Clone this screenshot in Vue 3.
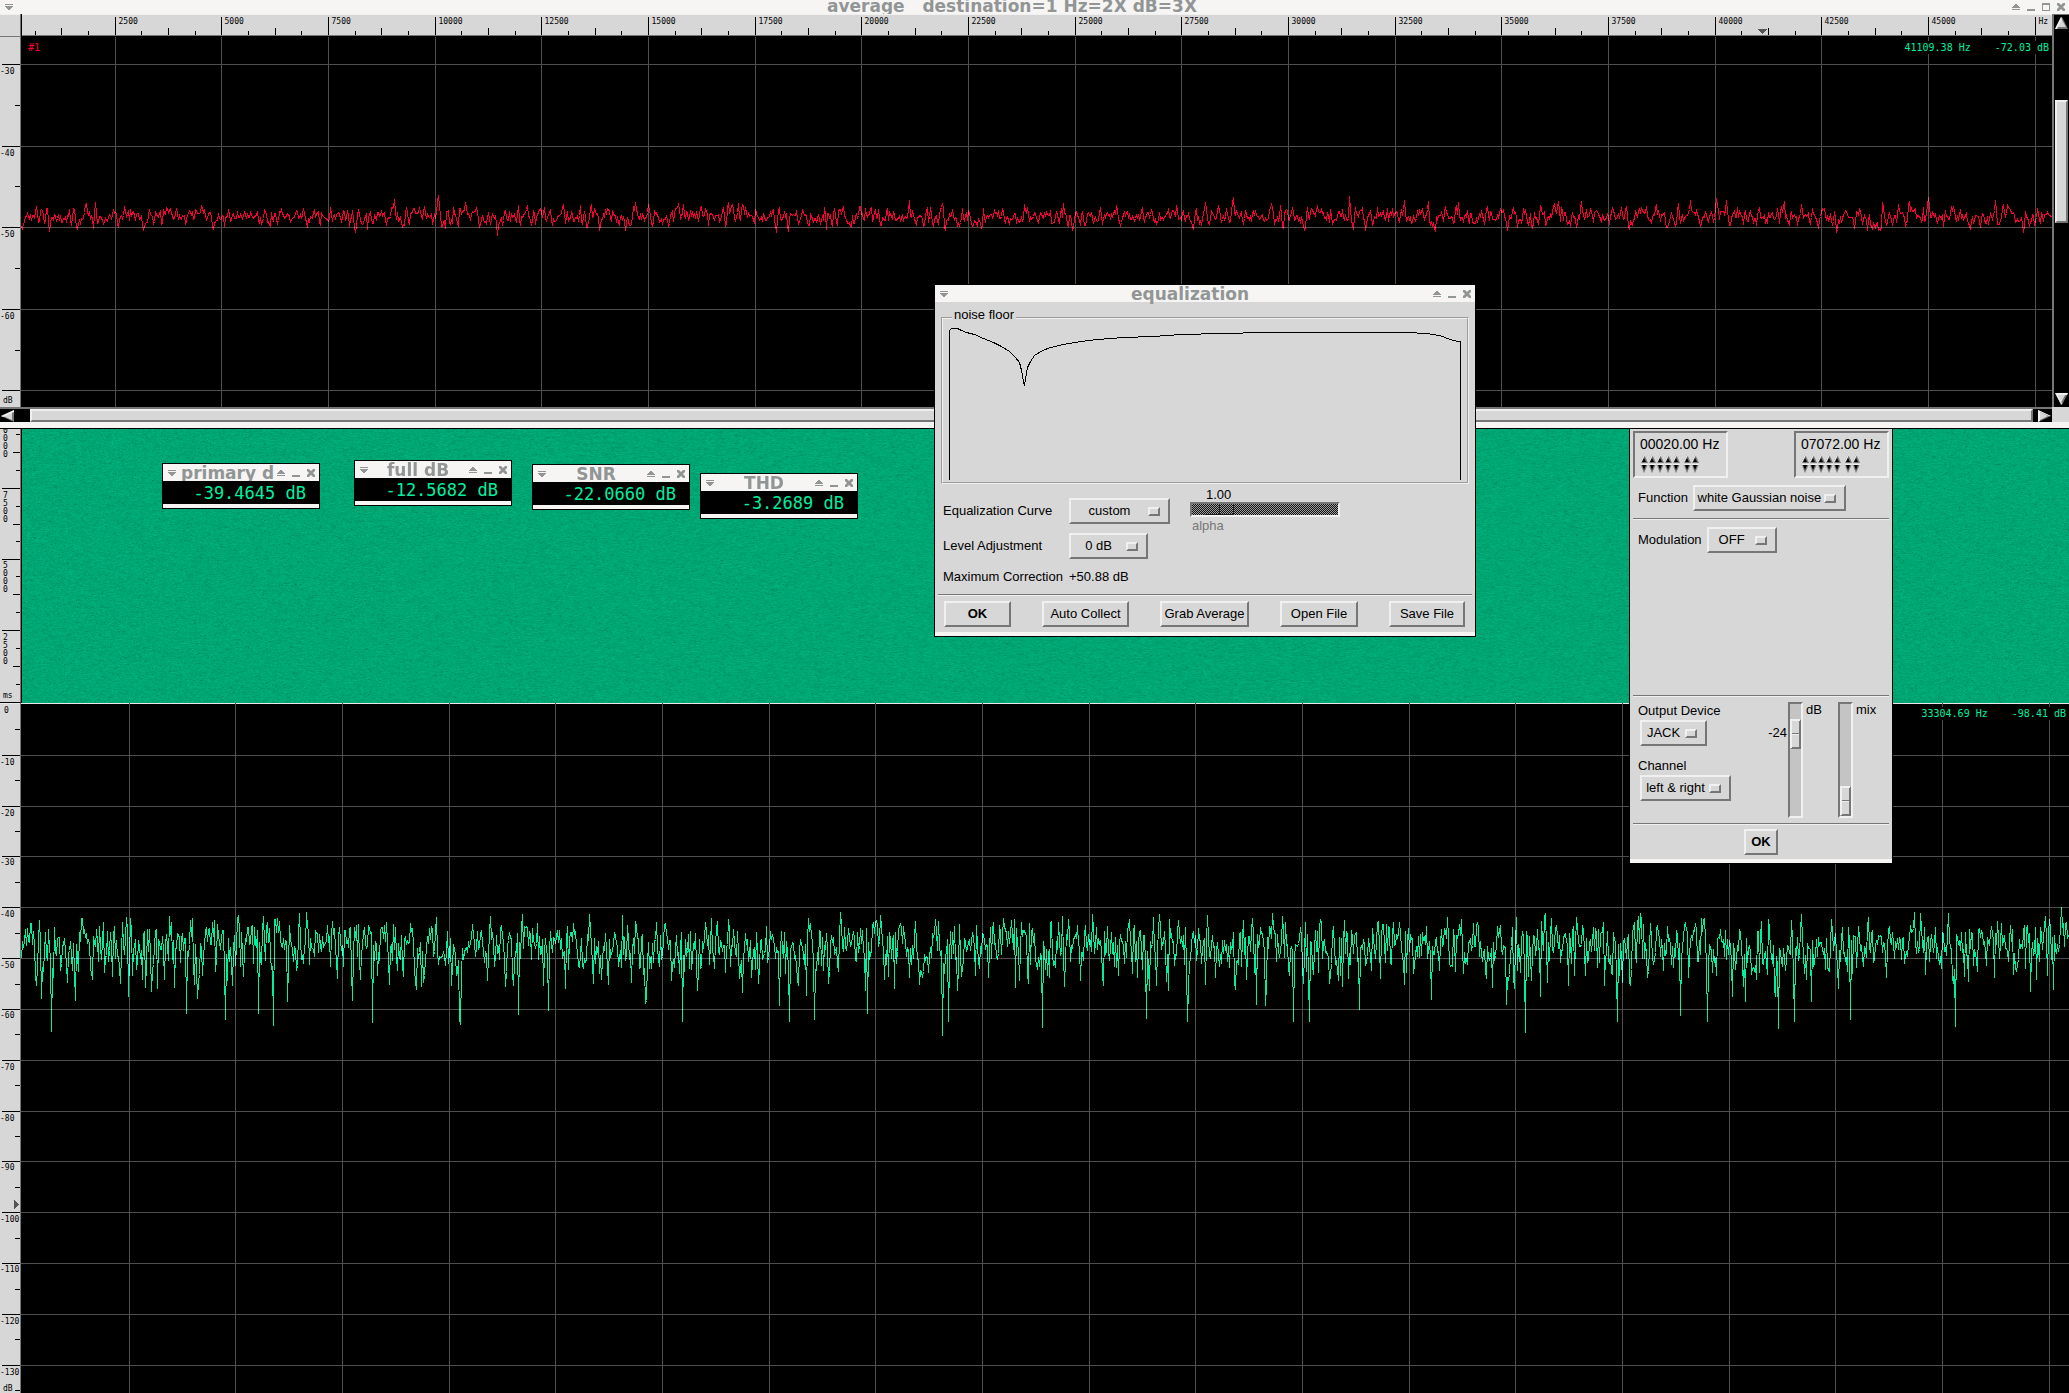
<script setup>
import { onMounted, ref } from 'vue'

const pct = (value, total) => `${(value / total) * 100}%`

const mainTitle = 'average   destination=1 Hz=2X dB=3X'
const averageReadout = '41109.38 Hz    -72.03 dB'
const liveReadout = '33304.69 Hz    -98.41 dB'

function randomSource(seed) {
  let state = seed
  return () => {
    state = (state + 0x6d2b79f5) | 0
    let t = Math.imul(state ^ (state >>> 15), 1 | state)
    t = (t + Math.imul(t ^ (t >>> 7), 61 | t)) ^ t
    return ((t ^ (t >>> 14)) >>> 0) / 4294967296
  }
}

function gaussian(random) {
  return Math.sqrt(-2 * Math.log(1 - random())) * Math.cos(2 * Math.PI * random())
}

/* Frequency axis: one tick per 625 Hz, a labelled one per 2500 Hz */
function frequencyTicks(origin, width) {
  const ticks = []
  for (let i = 1; i < 80; i++) {
    const x = Math.round(origin + i * 26.6667) + 0.5
    if (x < 2 || x > width) continue
    const level = i % 4 === 0 ? 'major' : i % 2 === 0 ? 'mid' : 'minor'
    const hz = i * 625
    ticks.push({ x: pct(x, width), level, label: level === 'major' ? (hz > 45000 ? 'Hz' : String(hz)) : '' })
  }
  return ticks
}
const topX = frequencyTicks(-13, 2031)
const bottomX = frequencyTicks(1, 2048).filter((t) => t.level === 'major')
const tickTop = { major: 3, mid: 14, minor: 17 }

function levelTicks(start, step, from, count, height) {
  const ticks = []
  for (let i = 0; i < count; i++) {
    const y = Math.round(start + (i * step) / 2) + 0.5
    ticks.push({ y: pct(y, height), major: i % 2 === 0, label: i % 2 === 0 ? String(from - i * 5) : '' })
  }
  return ticks
}
const topY = levelTicks(27, 81.6, -30, 9, 370).map((t, i) => (i === 8 ? { ...t, label: '' } : t))
const bottomY = levelTicks(1, 50.83, 0, 28, 690).slice(1)

const timeTicks = []
for (let k = 0; k < 15; k++) {
  const y = 5 + k * 17.9
  const phase = (k + 1) % 4
  timeTicks.push({ y: pct(Math.round(y) + 0.5, 274), x: phase === 0 ? 2 : phase === 2 ? 13 : 16 })
}
const timeLabels = [
  { at: -5, digits: '0000' },
  { at: 60, digits: '7500' },
  { at: 131, digits: '5000' },
  { at: 203, digits: '2500' },
]
const timeDigits = timeLabels.flatMap((l) =>
  [...l.digits].map((digit, i) => ({ digit, y: pct(l.at + 9 + i * 8, 274) })),
)

function averagedTrace() {
  const random = randomSource(11)
  const raw = Array.from({ length: 2034 }, () => gaussian(random))
  return Array.from({ length: 2031 }, (_, x) => {
    const v = raw[x] * 0.3 + raw[x + 1] + raw[x + 2] * 0.3
    return `${x + 0.5},${Math.round(179 - v * 5 - (v > 2 ? (v - 2) * 2 : 0)) + 0.5}`
  }).join(' ')
}

const deepDips = { 30: 328, 237: 310, 252: 322, 351: 319, 439: 321, 846: 310, 921: 332, 1021: 324, 1504: 329, 1757: 325, 1829: 316, 1934: 323 }
function liveTrace() {
  const random = randomSource(42)
  const n = 2048
  const parts = Array.from({ length: 5 }, () => Array.from({ length: n + 2 }, () => gaussian(random)))
  return Array.from({ length: n }, (_, x) => {
    let power = 0
    for (const p of parts) {
      const v = p[x] * 0.3 + p[x + 1] + p[x + 2] * 0.3
      power += v * v
    }
    const db = 10 * Math.log10(power / 5.9)
    const y = deepDips[x] ?? Math.min(318, 240 - db * 6)
    return `${x + 0.5},${Math.round(y) + 0.5}`
  }).join(' ')
}
const redTrace = averagedTrace()
const greenTrace = liveTrace()

const noiseFloor =
  '6,160 6,11 8,9 14,9 18,11 23,13 31,15 40,19 50,23 58,27 66,32 72,38 76,43 78,51 80,62 81,66 82,59 84,48 87,42 91,36 99,31 107,28 120,25 137,22 154,20 180,18 209,17 238,15 278,14 322,13 358,13 464,13 483,14 496,16 507,20 514,22 517,22 517,160'

const meters = [
  { id: 'primary', title: 'primary d', value: '-39.4645 dB' },
  { id: 'full', title: 'full dB', value: '-12.5682 dB' },
  { id: 'snr', title: 'SNR', value: '-22.0660 dB' },
  { id: 'thd', title: 'THD', value: '-3.2689 dB' },
]

const curve = ref('custom')
const level = ref('0 dB')
const alpha = ref(1)
const waveform = ref('white Gaussian noise')
const modulation = ref('OFF')
const device = ref('JACK')
const channel = ref('left & right')
const gain = ref(-24)
const mix = ref(0)
const frequencies = ['00020.00 Hz', '07072.00 Hz']

const waterfall = ref(null)
onMounted(() => {
  const canvas = waterfall.value
  const ctx = canvas.getContext('2d')
  const { width, height } = canvas
  const image = ctx.createImageData(width, height)
  const random = randomSource(7)
  let previous = 0
  for (let i = 0; i < width * height; i++) {
    const g = gaussian(random)
    previous = previous * 0.35 + g
    const n = Math.max(-30, Math.min(14, previous * 6 - (g < -2.3 ? 12 : 0)))
    image.data[i * 4] = 0
    image.data[i * 4 + 1] = 166 + n
    image.data[i * 4 + 2] = 115 + n * 0.7
    image.data[i * 4 + 3] = 255
  }
  ctx.putImageData(image, 0, 0)
})
</script>

<template>
  <main class="desktop">
    <section class="average">
      <header class="titlebar main-title">
        <button class="tb" aria-label="Window menu"><svg viewBox="0 0 8 6"><path d="M0 0h8v1H0zM0 2h8v1H7v1H6v1H5v1H3V5H2V4H1V3H0z" /></svg></button>
        <h1>{{ mainTitle }}</h1>
        <button class="tb" aria-label="Shade"><svg viewBox="0 0 8 6"><path d="M0 5h8v1H0zM3 0h2v1h1v1h1v1h1v1H0V3h1V2h1V1h1z" /></svg></button>
        <button class="tb" aria-label="Minimize"><svg viewBox="0 0 8 8"><path d="M0 6h8v2H0z" /></svg></button>
        <button class="tb" aria-label="Maximize"><svg viewBox="0 0 8 8"><path d="M0 0h8v8H0zM1 2v5h6V2z" fill-rule="evenodd" /></svg></button>
        <button class="tb" aria-label="Close"><svg viewBox="0 0 8 8"><path d="M0 0h2l2 2 2-2h2v2L6 4l2 2v2H6L4 6 2 8H0V6l2-2-2-2z" /></svg></button>
      </header>

      <div class="average-body">
        <div class="corner"></div>
        <svg class="h-ruler crisp">
          <template v-for="t in topX" :key="t.x">
            <line :x1="t.x" :x2="t.x" :y1="tickTop[t.level]" y2="21" class="tick" />
            <text v-if="t.label" :x="t.x" y="10" dx="3" class="scale">{{ t.label }}</text>
          </template>
          <svg :x="pct(1737, 2031)" y="15" width="9" height="5"><path d="M0 0h9L5 5H4z" fill="#555" /></svg>
        </svg>
        <svg class="v-ruler crisp">
          <template v-for="t in topY" :key="t.y">
            <line :x1="t.major ? 2 : 15" x2="20" :y1="t.y" :y2="t.y" class="tick" />
            <text x="0" :y="t.y" dy="9" class="scale">{{ t.label }}</text>
          </template>
          <text x="3" :y="pct(366, 370)" class="scale">dB</text>
        </svg>
        <div class="plot">
          <svg class="fill crisp">
            <line v-for="t in topX.filter((l) => l.label)" :key="t.x" :x1="t.x" :x2="t.x" y1="0" y2="100%" class="grid" />
            <line v-for="t in topY.filter((l) => l.major)" :key="t.y" x1="0" x2="100%" :y1="t.y" :y2="t.y" class="grid" />
            <svg viewBox="0 0 2031 370" preserveAspectRatio="none" width="100%" height="100%">
              <polyline :points="redTrace" class="trace red" />
            </svg>
          </svg>
          <span class="trace-id">#1</span>
          <output class="readout">{{ averageReadout }}</output>
        </div>
        <div class="v-scroll">
          <svg viewBox="0 0 13 12" class="arrow"><path d="M6 0h1l6 12H0z" fill="#767676" /><path d="M6 1l5 9H1z" fill="#d7d7d7" /><path d="M6 0L0 12h2L7 2z" fill="#f0f0f0" /></svg>
          <div class="v-track"><div class="v-thumb"></div></div>
          <svg viewBox="0 0 13 12" class="arrow"><path d="M0 0h13L7 12H6z" fill="#767676" /><path d="M2 2h8l-4 8z" fill="#d7d7d7" /><path d="M0 0h13l-1 2H3l4 9H6z" fill="#f0f0f0" /></svg>
        </div>
      </div>
      <div class="h-scroll">
        <svg viewBox="0 0 13 12" class="arrow"><path d="M0 6l13-6v12z" fill="#767676" /><path d="M2 6l9-4v8z" fill="#d7d7d7" /><path d="M0 6l13-6v2L2 7z" fill="#f0f0f0" /></svg>
        <div class="h-thumb"></div>
        <svg viewBox="0 0 13 12" class="arrow"><path d="M0 0l13 6-13 6z" fill="#767676" /><path d="M2 2l8 4-8 4z" fill="#d7d7d7" /><path d="M0 0l13 6H11L2 2v9l-2 1z" fill="#f0f0f0" /></svg>
        <div class="scroll-corner"></div>
      </div>
      <div class="window-foot"></div>
    </section>

    <section class="spectrogram">
      <svg class="v-ruler crisp">
        <line v-for="t in timeTicks" :key="t.y" :x1="t.x" x2="20" :y1="t.y" :y2="t.y" class="tick" />
        <text v-for="d in timeDigits" :key="d.y" x="3" :y="d.y" class="scale">{{ d.digit }}</text>
        <text x="3" :y="pct(270, 274)" class="scale">ms</text>
      </svg>
      <div class="waterfall"><canvas ref="waterfall" width="2048" height="274"></canvas></div>
    </section>

    <section class="live">
      <svg class="v-ruler crisp">
        <text x="4" y="10" class="scale">0</text>
        <template v-for="t in bottomY" :key="t.y">
          <line :x1="t.major ? 2 : 15" x2="20" :y1="t.y" :y2="t.y" class="tick" />
          <text x="0" :y="t.y" dy="9" class="scale">{{ t.label }}</text>
        </template>
        <svg x="14" :y="pct(497, 690)" width="5" height="9"><path d="M0 0l5 4v1L0 9z" fill="#555" /></svg>
        <text x="3" :y="pct(688, 690)" class="scale">dB</text>
      </svg>
      <div class="plot">
        <svg class="fill crisp">
          <line v-for="t in bottomX" :key="t.x" :x1="t.x" :x2="t.x" y1="0" y2="100%" class="grid" />
          <line v-for="t in bottomY.filter((l) => l.major)" :key="t.y" x1="0" x2="100%" :y1="t.y" :y2="t.y" class="grid" />
          <svg viewBox="0 0 2048 690" preserveAspectRatio="none" width="100%" height="100%">
            <polyline :points="greenTrace" class="trace green" />
          </svg>
        </svg>
        <output class="readout">{{ liveReadout }}</output>
      </div>
    </section>

    <section v-for="m in meters" :key="m.id" class="window meter" :class="m.id">
      <header class="titlebar">
        <button class="tb" aria-label="Window menu"><svg viewBox="0 0 8 6"><path d="M0 0h8v1H0zM0 2h8v1H7v1H6v1H5v1H3V5H2V4H1V3H0z" /></svg></button>
        <h2>{{ m.title }}</h2>
        <button class="tb" aria-label="Shade"><svg viewBox="0 0 8 6"><path d="M0 5h8v1H0zM3 0h2v1h1v1h1v1h1v1H0V3h1V2h1V1h1z" /></svg></button>
        <button class="tb" aria-label="Minimize"><svg viewBox="0 0 8 8"><path d="M0 6h8v2H0z" /></svg></button>
        <button class="tb" aria-label="Close"><svg viewBox="0 0 8 8"><path d="M0 0h2l2 2 2-2h2v2L6 4l2 2v2H6L4 6 2 8H0V6l2-2-2-2z" /></svg></button>
      </header>
      <output class="meter-value">{{ m.value }}</output>
    </section>

    <section class="window equalization">
      <header class="titlebar">
        <button class="tb" aria-label="Window menu"><svg viewBox="0 0 8 6"><path d="M0 0h8v1H0zM0 2h8v1H7v1H6v1H5v1H3V5H2V4H1V3H0z" /></svg></button>
        <h2>equalization</h2>
        <button class="tb" aria-label="Shade"><svg viewBox="0 0 8 6"><path d="M0 5h8v1H0zM3 0h2v1h1v1h1v1h1v1H0V3h1V2h1V1h1z" /></svg></button>
        <button class="tb" aria-label="Minimize"><svg viewBox="0 0 8 8"><path d="M0 6h8v2H0z" /></svg></button>
        <button class="tb" aria-label="Close"><svg viewBox="0 0 8 8"><path d="M0 0h2l2 2 2-2h2v2L6 4l2 2v2H6L4 6 2 8H0V6l2-2-2-2z" /></svg></button>
      </header>
      <div class="eq-body">
        <fieldset>
          <legend>noise floor</legend>
          <svg class="curve crisp" viewBox="0 9 524 154" preserveAspectRatio="none"><polyline :points="noiseFloor" transform="translate(.5 .5)" /></svg>
        </fieldset>
        <div class="eq-row tall">
          <label for="curve">Equalization Curve</label>
          <div class="menu w101"><select id="curve" v-model="curve"><option>custom</option></select></div>
          <div class="alpha">
            <output>1.00</output>
            <input id="alpha" v-model="alpha" type="range" min="0" max="10" step="0.01" disabled />
            <label for="alpha">alpha</label>
          </div>
        </div>
        <div class="eq-row">
          <label for="level">Level Adjustment</label>
          <div class="menu w79"><select id="level" v-model="level"><option>0 dB</option></select></div>
        </div>
        <div class="eq-row">
          <span class="name">Maximum Correction</span>
          <output>+50.88 dB</output>
        </div>
      </div>
      <hr />
      <div class="actions">
        <button class="push w67"><b>OK</b></button>
        <button class="push w87">Auto Collect</button>
        <button class="push w89">Grab Average</button>
        <button class="push w78">Open File</button>
        <button class="push w76">Save File</button>
      </div>
    </section>

    <section class="window generator">
      <div class="freqs">
        <div v-for="f in frequencies" :key="f" class="freq">
          <output>{{ f }}</output>
          <div v-for="dir in ['up', 'down']" :key="dir" class="steps">
            <button v-for="n in 7" :key="n" class="step" :class="{ decimal: n === 6 }" :aria-label="`Digit ${n} ${dir}`">
              <svg viewBox="0 0 8 9">
                <template v-if="dir === 'up'"><path d="M4 0l4 9H0z" fill="#767676" /><path d="M4 4l2 4H2z" /><path d="M4 0L0 9h1l4-8z" fill="#f0f0f0" /></template>
                <template v-else><path d="M0 0h8L4 9z" fill="#767676" /><path d="M2 1h4L4 6z" /><path d="M0 0h8v1H1l3 7z" fill="#f0f0f0" /></template>
              </svg>
            </button>
          </div>
        </div>
      </div>
      <div class="gen-row">
        <label for="waveform">Function</label>
        <div class="menu w153"><select id="waveform" v-model="waveform"><option>white Gaussian noise</option></select></div>
      </div>
      <hr />
      <div class="gen-row">
        <label for="modulation">Modulation</label>
        <div class="menu w70"><select id="modulation" v-model="modulation"><option>OFF</option></select></div>
      </div>
      <div class="gap"></div>
      <hr />
      <div class="output">
        <div class="routing">
          <label for="device">Output Device</label>
          <div class="menu w67"><select id="device" v-model="device"><option>JACK</option></select></div>
          <label for="channel">Channel</label>
          <div class="menu w91"><select id="channel" v-model="channel"><option>left &amp; right</option></select></div>
        </div>
        <output class="gain-value">{{ gain }}</output>
        <div class="fader">
          <input id="gain" v-model="gain" type="range" min="-130" max="0" />
          <label for="gain">dB</label>
        </div>
        <div class="fader">
          <input id="mix" v-model="mix" type="range" min="0" max="100" />
          <label for="mix">mix</label>
        </div>
      </div>
      <hr />
      <div class="confirm"><button class="push w34"><b>OK</b></button></div>
    </section>
  </main>
</template>

<style>
html,
body {
  margin: 0;
  background: #000;
}
</style>

<style scoped>
*,
*::before,
*::after {
  box-sizing: border-box;
}
.desktop {
  position: relative;
  display: flex;
  flex-direction: column;
  min-width: 1900px;
  height: 100vh;
  min-height: 1200px;
  overflow: hidden;
  background: #000;
  color: #000;
  font: 13px/14px "Liberation Sans", Arial, sans-serif;
}
button,
input,
select {
  margin: 0;
  font: inherit;
  color: inherit;
}
.crisp {
  shape-rendering: crispEdges;
}

/* Title bars */
.titlebar {
  display: flex;
  align-items: center;
  flex: none;
  height: 17px;
  padding: 0 1px;
  background: #f6f5f4;
}
.titlebar h1,
.titlebar h2 {
  flex: 1;
  min-width: 0;
  height: 100%;
  margin: 0 2px;
  color: #929595;
  font: bold 17px/19px "DejaVu Sans", sans-serif;
  text-align: center;
  white-space: pre;
}
.titlebar.main-title {
  height: 14px;
}
.titlebar.main-title h1 {
  line-height: 13px;
}
.tb {
  display: flex;
  align-items: center;
  justify-content: center;
  flex: none;
  width: 15px;
  height: 14px;
  padding: 0;
  border: 0;
  background: none;
}
.tb svg {
  width: 8px;
  fill: #929595;
}

/* Averaged spectrum */
.average {
  display: flex;
  flex: 429 0 0;
  flex-direction: column;
  min-height: 0;
}
.average-body {
  position: relative;
  display: grid;
  flex: 1;
  grid-template: 23px minmax(0, 1fr) / 21px minmax(0, 1fr) 17px;
  min-height: 0;
}
.corner {
  border: solid #767676;
  border-width: 0 1px 1px 0;
  background: #d7d7d7;
  box-shadow: inset 0 1px #f0f0f0;
}
.h-ruler {
  width: 100%;
  height: 23px;
  border: solid #000;
  border-width: 0 0 1px;
  background: #d7d7d7;
  box-shadow: inset 1px 0 #000, inset 0 1px #f0f0f0, inset 0 -1px #767676;
}
.v-ruler {
  width: 21px;
  height: 100%;
  border-right: 1px solid #767676;
  background: #d7d7d7;
}
.tick {
  stroke: #000;
}
.scale {
  fill: #000;
  font: 8px "DejaVu Sans Mono", monospace;
}
.plot {
  position: relative;
  min-width: 0;
  background: #000;
}
.fill {
  position: absolute;
  width: 100%;
  height: 100%;
}
.grid {
  stroke: #4f4f4f;
}
.trace {
  fill: none;
  stroke-width: 1;
  vector-effect: non-scaling-stroke;
  mix-blend-mode: plus-lighter;
}
.trace.red {
  stroke: #f80032;
}
.trace.green {
  stroke: #00f0a0;
}
.readout,
.trace-id {
  position: absolute;
  top: 4px;
  height: 13px;
  background: #000;
  font: 10px/13px "DejaVu Sans Mono", monospace;
  white-space: pre;
}
.readout {
  right: 3px;
  color: #00f0a0;
}
.trace-id {
  left: 7px;
  color: #f80032;
}
.v-scroll {
  display: flex;
  grid-area: 1 / 3 / 3 / 4;
  flex-direction: column;
  padding: 2px 1px;
  border: solid #767676;
  border-width: 1px 0 0 2px;
  background: #000;
}
.arrow {
  width: 13px;
  height: 12px;
  flex: none;
}
.v-track {
  display: flex;
  flex: 1;
  flex-direction: column;
}
.v-track::before {
  flex: 72;
  content: "";
}
.v-track::after {
  flex: 171;
  content: "";
}
.v-thumb,
.h-thumb {
  border: 2px solid;
  border-color: #f0f0f0 #767676 #767676 #f0f0f0;
  background: #d7d7d7;
}
.v-thumb {
  flex: 120;
}
.h-scroll {
  display: flex;
  flex: none;
  align-items: center;
  height: 15px;
  padding-left: 1px;
  border-top: 2px solid #767676;
  background: #000;
}
.h-thumb {
  flex: 1;
  height: 13px;
  margin: 0 5px 0 16px;
}
.scroll-corner {
  width: 17px;
  height: 15px;
  margin: -2px 0 0 1px;
  background: #d7d7d7;
}
.window-foot {
  flex: none;
  height: 7px;
  border-bottom: 1px solid #000;
  background: #f6f5f4;
}

/* Spectrogram */
.spectrogram {
  display: flex;
  flex: 274 0 0;
  min-height: 0;
}
.spectrogram .v-ruler {
  border-bottom: 1px solid #000;
}
.waterfall {
  flex: 1;
  min-width: 0;
  border-left: 1px solid #000;
}
.waterfall canvas {
  display: block;
  width: 100%;
  height: 100%;
}

/* Live spectrum */
.live {
  display: flex;
  flex: 690 0 0;
  min-height: 0;
}
.live .plot {
  flex: 1;
}
.live .v-ruler,
.live .plot {
  box-shadow: inset 0 1px #e8e8e8;
}

/* Floating windows */
.window {
  position: absolute;
  display: flex;
  flex-direction: column;
  border: 1px solid #000;
  background: #d7d7d7;
}
.meter {
  width: 158px;
  height: 46px;
  background: #f6f5f4;
}
.primary {
  left: 162px;
  top: 463px;
}
.full {
  left: 354px;
  top: 460px;
}
.snr {
  left: 532px;
  top: 464px;
}
.thd {
  left: 700px;
  top: 473px;
}
.meter-value {
  height: 23px;
  padding: 1px 13px 0 0;
  background: #000;
  color: #00f0a0;
  font: 17px/22px "DejaVu Sans Mono", monospace;
  text-align: right;
}

.equalization {
  left: 934px;
  top: 284px;
  width: 542px;
  box-shadow: inset 0 -4px #f6f5f4;
}
.eq-body {
  padding: 6px 6px 0;
}
fieldset {
  min-width: 0;
  margin: 0;
  padding: 0;
  border: 2px groove #f0f0f0;
}
legend {
  height: 20px;
  margin-left: 9px;
  padding: 0 2px;
}
.curve {
  display: block;
  width: 100%;
  height: 154px;
}
.curve polyline {
  fill: none;
  stroke: #000;
}
.eq-row {
  display: flex;
  align-items: center;
  height: 26px;
  padding-left: 2px;
}
.eq-row.tall {
  height: 45px;
  margin-top: 4px;
}
.eq-row > label,
.eq-row > .name {
  width: 126px;
}
.eq-row:last-child {
  height: 35px;
}
.alpha {
  display: flex;
  flex-direction: column;
  width: 150px;
  margin-left: 20px;
}
.alpha output {
  padding-left: 16px;
}
.alpha label {
  margin-top: 2px;
  padding-left: 2px;
  color: #777;
}
hr {
  flex: none;
  width: auto;
  height: 2px;
  margin: 0 3px;
  border: 0;
  background: linear-gradient(#767676 50%, #f0f0f0 50%);
}
.actions {
  display: flex;
  justify-content: space-between;
  padding: 5px 10px 9px 9px;
}

/* Controls */
.push,
.menu select,
.freq {
  border: 2px solid;
  border-color: #f0f0f0 #767676 #767676 #f0f0f0;
  border-radius: 0;
  background: #d7d7d7;
}
.push {
  height: 26px;
  padding: 0;
  white-space: nowrap;
}
.menu {
  position: relative;
}
.menu select {
  display: block;
  width: 100%;
  height: 26px;
  padding: 0 20px 0 0;
  appearance: none;
  text-align: center;
  text-align-last: center;
}
.menu::after {
  position: absolute;
  top: 9px;
  right: 10px;
  width: 12px;
  height: 9px;
  border: 2px solid;
  border-color: #f0f0f0 #767676 #767676 #f0f0f0;
  content: "";
  pointer-events: none;
}
.w34 { width: 34px; }
.w67 { width: 67px; }
.w70 { width: 70px; }
.w76 { width: 76px; }
.w78 { width: 78px; }
.w79 { width: 79px; }
.w87 { width: 87px; }
.w89 { width: 89px; }
.w91 { width: 91px; }
.w101 { width: 101px; }
.w153 { width: 153px; }

input[type="range"] {
  appearance: none;
  border: 2px solid;
  border-color: #767676 #f0f0f0 #f0f0f0 #767676;
  background: #c4c4c4;
}
.alpha input {
  width: 150px;
  height: 15px;
  background: repeating-conic-gradient(#111 0 25%, #a0a0a0 0 50%) 0 0 / 2px 2px;
}
.alpha input::-webkit-slider-thumb {
  width: 30px;
  height: 11px;
  appearance: none;
  border: 1px solid;
  border-color: transparent #222 #222 transparent;
  background: linear-gradient(90deg, transparent 14px, #222 14px 15px, transparent 15px);
}
.fader {
  display: flex;
  gap: 3px;
  width: 50px;
}
.fader label {
  margin-top: 1px;
}
.fader input {
  width: 15px;
  height: 116px;
  flex: none;
  direction: rtl;
  writing-mode: vertical-lr;
}
.fader input::-webkit-slider-thumb {
  width: 11px;
  height: 30px;
  appearance: none;
  border: 1px solid;
  border-color: #f0f0f0 #767676 #767676 #f0f0f0;
  background: linear-gradient(#d7d7d7 13px, #767676 13px 14px, #f0f0f0 14px 15px, #d7d7d7 15px);
  box-shadow: inset 1px 1px #f0f0f0, inset -1px -1px #767676;
}

/* Signal generator */
.generator {
  left: 1629px;
  top: 429px;
  width: 264px;
  height: 435px;
  padding-top: 2px;
  border-top: 0;
  box-shadow: inset 0 -4px #f6f5f4;
}
.freqs {
  display: flex;
  justify-content: space-between;
  padding: 0 3px;
}
.freq {
  width: 95px;
  height: 47px;
  padding: 3px 0 0 5px;
  border-color: #767676 #f0f0f0 #f0f0f0 #767676;
}
.freq output {
  display: block;
  height: 18px;
  font-size: 14px;
  line-height: 16px;
}
.steps {
  display: flex;
  height: 10px;
}
.step {
  display: flex;
  width: 8px;
  height: 9px;
  padding: 0;
  border: 0;
  background: none;
}
.step.decimal {
  margin-left: 3px;
}
.step svg {
  width: 8px;
  height: 9px;
}
.gen-row {
  display: flex;
  align-items: center;
  gap: 5px;
  margin: 7px 0;
  padding-left: 8px;
}
.gap {
  flex: 1;
}
.output {
  display: flex;
  height: 116px;
  margin: 5px 0;
  padding-left: 8px;
}
.routing {
  display: flex;
  flex-direction: column;
  width: 121px;
}
.routing label {
  margin: 2px 0;
}
.routing .menu {
  margin: 0 0 11px 2px;
}
.gain-value {
  width: 29px;
  margin-top: 24px;
  padding-right: 1px;
  text-align: right;
}
.confirm {
  display: flex;
  justify-content: center;
  padding: 4px 0 8px;
}
</style>
